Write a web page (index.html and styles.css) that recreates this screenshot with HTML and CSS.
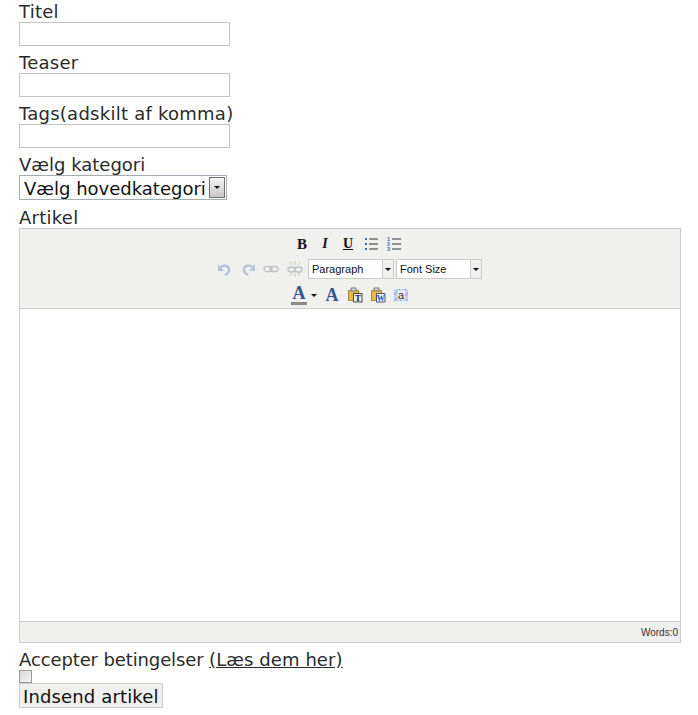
FILE: index.html
```html
<!DOCTYPE html>
<html lang="da">
<head>
    <meta charset="UTF-8">
    <title>Indsend artikel</title>
    <link rel="stylesheet" href="styles.css">
</head>
<body>
    <form class="article-form">
        <label class="field-label" for="titel">Titel</label>
        <input class="text-input" type="text" id="titel">
        <label class="field-label" for="teaser">Teaser</label>
        <input class="text-input" type="text" id="teaser">
        <label class="field-label" for="tags">Tags(adskilt af komma)</label>
        <input class="text-input" type="text" id="tags">
        <label class="field-label field-label-plain" for="kategori">Vælg kategori</label>
        <div class="category-select" id="kategori">
            <span class="category-value">Vælg hovedkategori</span>
            <span class="category-arrow"></span>
        </div>
        <label class="field-label">Artikel</label>

        <div class="editor">
            <div class="toolbar">
                <div class="tool-row tool-row-top">
                    <span class="tool tool-b">B</span>
                    <span class="tool tool-i">I</span>
                    <span class="tool tool-u">U</span>
                    <span class="tool">
                        <svg width="16" height="16" viewBox="0 0 16 16">
                            <path d="M6 3h9M6 8h9M6 13h9" stroke="#333" stroke-width="1" fill="none"/>
                            <path d="M2 2h2v2H2zM2 7h2v2H2zM2 12h2v2H2z" fill="#3f6aa8"/>
                        </svg>
                    </span>
                    <span class="tool">
                        <svg width="16" height="16" viewBox="0 0 16 16">
                            <path d="M6 3h9M6 8h9M6 13h9" stroke="#333" stroke-width="1" fill="none"/>
                            <text class="list-num" x="1" y="5">1</text>
                            <text class="list-num" x="1" y="10">2</text>
                            <text class="list-num" x="1" y="15">3</text>
                        </svg>
                    </span>
                </div>
                <div class="tool-row tool-row-mid">
                    <span class="tool">
                        <svg width="16" height="16" viewBox="0 0 16 16">
                            <path d="M3 8c2-4 9-5 10 0 .5 3-2 5-4 6" stroke="#b4c2dc" stroke-width="2.400" fill="none"/>
                            <path d="M2 3v7h6z" fill="#b4c2dc"/>
                        </svg>
                    </span>
                    <span class="tool tool-redo">
                        <svg width="16" height="16" viewBox="0 0 16 16">
                            <path d="M13 8C11 4 4 3 3 8c-.5 3 2 5 4 6" stroke="#b4c2dc" stroke-width="2.400" fill="none"/>
                            <path d="M14 3v7H8z" fill="#b4c2dc"/>
                        </svg>
                    </span>
                    <span class="tool">
                        <svg width="16" height="16" viewBox="0 0 16 16">
                            <rect x="1" y="5.500" width="8" height="5" rx="2.500" stroke="#c0c4c8" stroke-width="1.400" fill="none"/>
                            <rect x="7" y="5.500" width="8" height="5" rx="2.500" stroke="#c0c4c8" stroke-width="1.400" fill="none"/>
                        </svg>
                    </span>
                    <span class="tool tool-unlink">
                        <svg width="16" height="16" viewBox="0 0 16 16">
                            <rect x="1" y="6" width="7" height="5" rx="2.500" stroke="#c0c4c8" stroke-width="1.400" fill="none"/>
                            <rect x="8" y="6" width="7" height="5" rx="2.500" stroke="#c0c4c8" stroke-width="1.400" fill="none"/>
                            <path d="M8 0v4M3 1l2 3M13 1l-2 3M8 12v4M3 15l2-3M13 15l-2-3" stroke="#d2c8a8" stroke-width="1" fill="none"/>
                        </svg>
                    </span>
                    <div class="tool-select tool-select-format">
                        <span class="tool-select-value">Paragraph</span>
                        <span class="tool-select-arrow"></span>
                    </div>
                    <div class="tool-select tool-select-size">
                        <span class="tool-select-value">Font Size</span>
                        <span class="tool-select-arrow"></span>
                    </div>
                </div>
                <div class="tool-row">
                    <span class="tool tool-color">A</span>
                    <span class="color-arrow"></span>
                    <span class="tool tool-a">A</span>
                    <span class="tool">
                        <svg width="16" height="16" viewBox="0 0 16 16">
                            <path d="M1.500 3.500h10v10h-10z" fill="#e3bb4a" stroke="#a8862e"/>
                            <path d="M4 1h5v3H4z" fill="#d8d8d0" stroke="#777"/>
                            <path d="M6.500 6.500h8.500v8.500H6.500z" fill="#eee" stroke="#444"/>
                            <text class="paste-t" x="8" y="13.500">T</text>
                        </svg>
                    </span>
                    <span class="tool">
                        <svg width="16" height="16" viewBox="0 0 16 16">
                            <path d="M1.500 3.500h10v10h-10z" fill="#e3bb4a" stroke="#a8862e"/>
                            <path d="M4 1h5v3H4z" fill="#d8d8d0" stroke="#777"/>
                            <path d="M6.500 6.500h8.500v8.500H6.500z" fill="#f4f6fb" stroke="#456"/>
                            <text class="paste-w" x="6.800" y="13.500">W</text>
                        </svg>
                    </span>
                    <span class="tool">
                        <svg width="16" height="16" viewBox="0 0 16 16">
                            <rect x="1" y="2" width="14" height="12" fill="#c3d3ee"/>
                            <path d="M1 8l6-6M1 14L13 2M7 14l8-8M13 14l2-2" stroke="#7f9edb" stroke-width="1"/>
                            <rect x="4.500" y="3.500" width="7.500" height="9" fill="#eef0f4"/>
                            <text class="clean-a" x="5" y="11.500">a</text>
                        </svg>
                    </span>
                </div>
            </div>
            <div class="editor-body"></div>
            <div class="statusbar">Words:0</div>
        </div>

        <div class="terms">Accepter betingelser <a href="#" class="terms-link">(Læs dem her)</a></div>
        <input class="terms-check" type="checkbox">
        <button class="submit-btn" type="button">Indsend artikel</button>
    </form>
</body>
</html>
```

FILE: styles.css
```css
body {
    margin: 0;
    background-color: #fff;
    color: #2b2b2b;
    font-family: "DejaVu Sans", sans-serif;
    font-size: 18px;
}
.article-form {
    display: flex;
    flex-direction: column;
    align-items: flex-start;
    padding: 0 17px 0 19px;
}
.field-label {
    display: block;
    height: 22px;
    line-height: 24px;
    letter-spacing: .25px;
}
.field-label-plain {
    letter-spacing: 0;
}
.text-input {
    box-sizing: border-box;
    width: 211px;
    height: 24px;
    margin: 0 0 5px;
    padding: 0;
    border: 1px solid #c4c4c4;
    background-color: #fff;
}
.category-select {
    box-sizing: border-box;
    display: flex;
    align-items: center;
    justify-content: space-between;
    width: 208px;
    height: 25px;
    margin-bottom: 6px;
    padding: 0 1px 0 4px;
    border: 1px solid #a5acb2;
    color: #111;
}
.category-value {
    padding-top: 2px;
}
.category-arrow {
    position: relative;
    width: 16px;
    height: 21px;
    border: 1px solid #6f6f6f;
    box-sizing: border-box;
    background: linear-gradient(#f4f4f4, #c8c8c8);
}
.category-arrow::after {
    content: "";
    position: absolute;
    left: 4px;
    top: 8px;
    border-left: 3px solid transparent;
    border-right: 3px solid transparent;
    border-top: 3px solid #111;
}
.editor {
    box-sizing: border-box;
    width: 662px;
    height: 415px;
    display: flex;
    flex-direction: column;
    border: 1px solid #ccc;
}
.toolbar {
    box-sizing: border-box;
    height: 80px;
    padding-top: 1px;
    background-color: #f0f0ee;
    border-bottom: 1px solid #ccc;
}
.tool-row {
    box-sizing: border-box;
    display: flex;
    align-items: center;
    justify-content: center;
    height: 26px;
    gap: 7px;
}
.tool-row-top {
    padding: 2px 4px 0 0;
}
.tool-row-mid {
    gap: 6px;
    padding-right: 2px;
}
.tool {
    display: flex;
    align-items: center;
    justify-content: center;
    width: 16px;
    height: 20px;
    font-family: "Liberation Serif", serif;
    font-size: 14px;
    font-weight: bold;
    color: #111;
}
.tool-b {
    font-size: 15px;
}
.tool-i {
    font-style: italic;
}
.tool-u {
    text-decoration: underline;
}
.tool-redo {
    margin-left: 3px;
}
.tool-unlink {
    margin-left: 2px;
}
.tool-color, .tool-a {
    font-size: 18px;
    color: #36558f;
}
.tool-color {
    height: 17px;
    line-height: 17px;
    border-bottom: 3px solid #888;
}
.color-arrow {
    width: 0;
    margin: 0 0 0 -3px;
    border-left: 3px solid transparent;
    border-right: 3px solid transparent;
    border-top: 3px solid #111;
}
.list-num {
    font-family: "Liberation Sans", sans-serif;
    font-size: 5.500px;
    font-weight: bold;
    fill: #3f6aa8;
}
.paste-t {
    font-family: "Liberation Serif", serif;
    font-size: 9px;
    font-weight: bold;
    fill: #222;
}
.paste-w {
    font-family: "Liberation Serif", serif;
    font-size: 8px;
    font-weight: bold;
    fill: #2450a8;
}
.clean-a {
    font-family: "Liberation Sans", sans-serif;
    font-size: 11px;
    font-weight: normal;
    fill: #333;
}
.tool-select {
    box-sizing: border-box;
    display: flex;
    width: 86px;
    height: 20px;
    border: 1px solid #ccc;
    background-color: #fff;
    font-family: "Liberation Sans", sans-serif;
    font-size: 11px;
    color: #111;
}
.tool-select-format {
    margin-left: -1px;
}
.tool-select-size {
    margin-left: -4px;
}
.tool-select-value {
    flex: 1;
    padding-left: 3px;
    line-height: 18px;
}
.tool-select-arrow {
    position: relative;
    width: 10px;
    background-color: #f0f0ee;
    border-left: 1px solid #ccc;
}
.tool-select-arrow::after {
    content: "";
    position: absolute;
    left: 2px;
    top: 8px;
    border-left: 3px solid transparent;
    border-right: 3px solid transparent;
    border-top: 3px solid #111;
}
.editor-body {
    flex: 1;
    background-color: #fff;
}
.statusbar {
    height: 21px;
    box-sizing: border-box;
    padding: 5px 2px 0 0;
    background-color: #f0f0ee;
    border-top: 1px solid #ccc;
    text-align: right;
    font-family: "Liberation Sans", sans-serif;
    font-size: 10px;
    color: #333;
}
.terms {
    height: 21px;
    margin-top: 5px;
    line-height: 24px;
    letter-spacing: -.12px;
}
.terms-link {
    color: #2b2b2b;
    text-decoration: underline;
    letter-spacing: .08px;
}
.terms-check {
    appearance: none;
    box-sizing: border-box;
    width: 13px;
    height: 13px;
    margin: 1px 0 0;
    border: 1px solid #9a9a9a;
    background: linear-gradient(135deg, #d8d8d8, #f4f4f4);
}
.submit-btn {
    box-sizing: border-box;
    height: 25px;
    padding: 2px 3px 0;
    border: 1px solid #ccc;
    background-color: #f0f0ee;
    color: #111;
    font-family: "DejaVu Sans", sans-serif;
    font-size: 18px;
    letter-spacing: .14px;
    line-height: 22px;
}
```
